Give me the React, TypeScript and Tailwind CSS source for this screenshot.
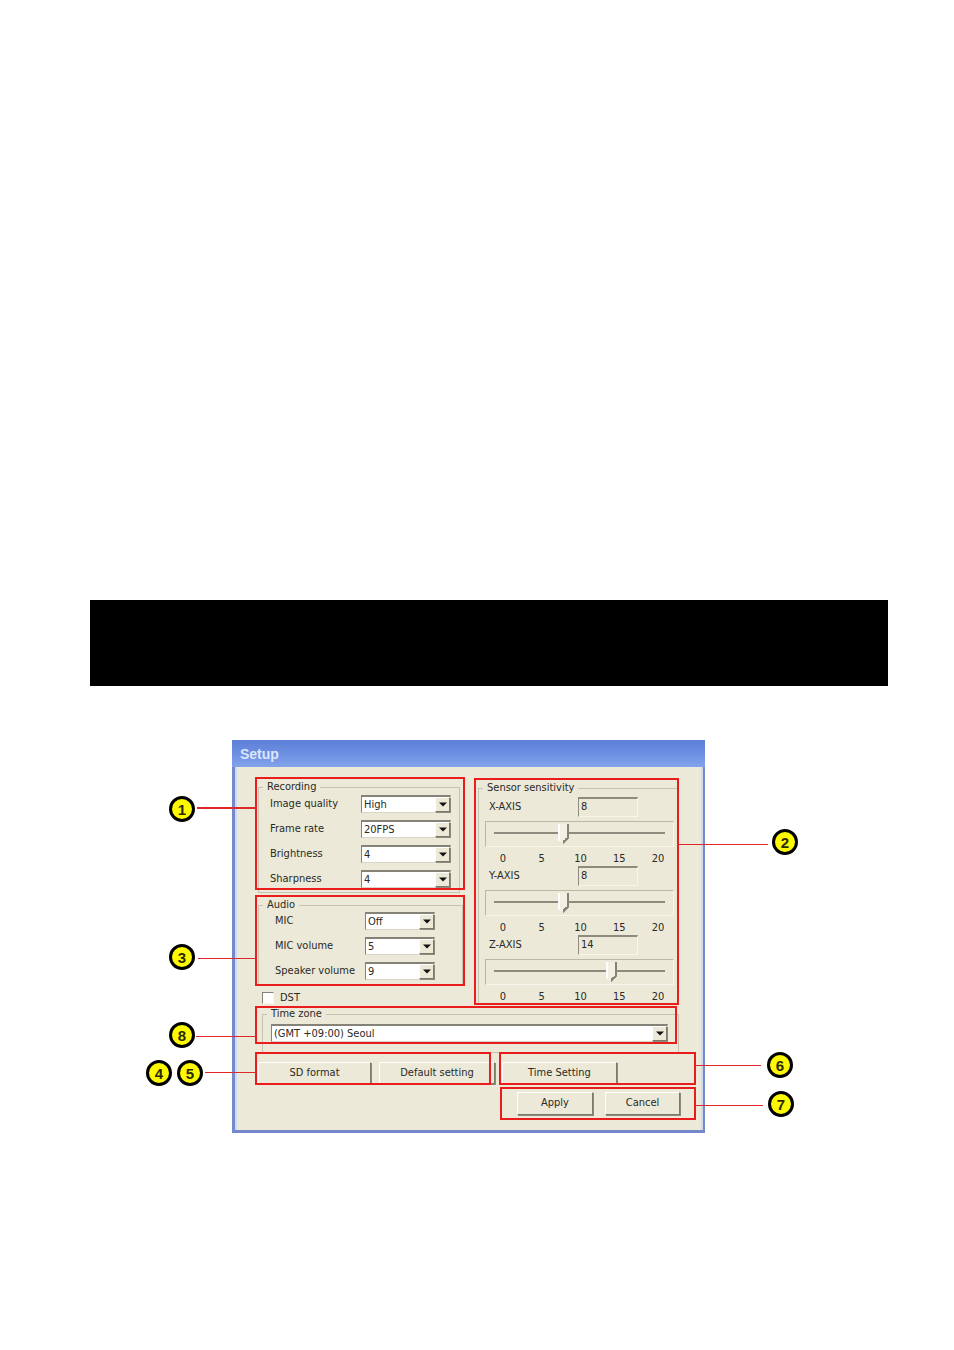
import React from "react";
import type { ReactNode } from "react";

const bevel =
  "border border-t-white border-l-white border-r-[#7d7a6c] border-b-[#7d7a6c] bg-[#ece9d8] shadow-[1px_1px_0_#8d8a7c]";

function Badge({ n, className }: { n: number; className: string }) {
  return (
    <span
      className={`absolute flex size-[26px] items-center justify-center rounded-full border-3 border-black bg-[#fdf900] text-[15px] leading-none font-bold text-[#2b2a05] ${className}`}
    >
      {n}
    </span>
  );
}

function Callout({ box, line, children }: { box: string; line: string; children: ReactNode }) {
  return (
    <div className={`pointer-events-none absolute z-10 border-2 border-[#ea1c1c] font-["Liberation_Sans",Arial,sans-serif] ${box}`}>
      <span className={`absolute bg-[#e0282c] ${line}`} />
      {children}
    </div>
  );
}

function Group({ title, className, children }: { title: ReactNode; className: string; children: ReactNode }) {
  return (
    <fieldset className={`min-w-0 border border-[#c6c3b3] ${className}`}>
      <legend className="ml-1 px-1 leading-[14px]">{title}</legend>
      {children}
    </fieldset>
  );
}

function Select({ id, options, value, className }: { id: string; options: string[]; value: string; className: string }) {
  return (
    <div className={`relative h-[18px] border border-t-2 border-[#d8d5c6] border-t-[#858278] border-l-[#858278] bg-white ${className}`}>
      <select id={id} defaultValue={value} className="block h-full w-full appearance-none bg-transparent pl-0.5 leading-[15px] outline-none">
        {options.map((o) => (
          <option key={o}>{o}</option>
        ))}
      </select>
      <span className={`pointer-events-none absolute top-0 right-0 flex h-[15px] w-[15px] items-center justify-center ${bevel}`}>
        <svg width="8" height="5" viewBox="0 0 8 5" aria-hidden="true">
          <path d="M0 0.5H8L4 4.5Z" fill="#111" />
        </svg>
      </span>
    </div>
  );
}

function Field({ id, label, options, value, width }: { id: string; label: string; options: string[]; value: string; width: string }) {
  return (
    <div className="flex items-center justify-between">
      <label htmlFor={id}>{label}</label>
      <Select id={id} options={options} value={value} className={width} />
    </div>
  );
}

const levels = ["0", "1", "2", "3", "4", "5", "6", "7", "8", "9", "10"];

function Axis({ name, value }: { name: string; value: number }) {
  const id = name.toLowerCase();
  return (
    <div>
      <div className="flex h-5 items-center pr-9 pl-1">
        <label htmlFor={id} className="flex-1 leading-[14px]">
          {name}
        </label>
        <input
          id={id}
          readOnly
          value={value}
          className="h-5 w-[60px] border border-t-2 border-[#f8f6ec] border-t-[#8d8a7e] border-l-[#8d8a7e] bg-[#ece9d8] px-0.5 pb-0.5 outline-none"
        />
      </div>
      <div className="mt-1 h-[26px] border border-[#f8f6ec] border-t-[#bab7a9] border-l-[#bab7a9] px-2">
        <input
          type="range"
          aria-label={`${name} level`}
          min={0}
          max={20}
          defaultValue={value}
          className="block h-6 w-full appearance-none bg-transparent bg-[linear-gradient(#8d8a7e,#8d8a7e)] bg-[length:100%_2px] bg-[position:0_10px] bg-no-repeat outline-none [&::-webkit-slider-thumb]:h-5 [&::-webkit-slider-thumb]:w-[11px] [&::-webkit-slider-thumb]:appearance-none [&::-webkit-slider-thumb]:bg-[linear-gradient(to_bottom_right,transparent_25%,#858276_25%),linear-gradient(to_right,#fff_2px,#f2f0e4_2px,#f2f0e4_9px,#858276_9px)] [&::-webkit-slider-thumb]:bg-[length:6px_6px,100%_100%] [&::-webkit-slider-thumb]:bg-[position:100%_100%,0_0] [&::-webkit-slider-thumb]:bg-no-repeat [&::-webkit-slider-thumb]:[clip-path:polygon(0_0,100%_0,100%_70%,50%_100%,0_80%)]"
        />
      </div>
      <div className="flex h-[19px] items-center justify-between pt-1 pr-1.5 pl-2">
        {[0, 5, 10, 15, 20].map((t) => (
          <span key={t} className="w-5 text-center leading-[14px]">
            {t}
          </span>
        ))}
      </div>
    </div>
  );
}

function PushButton({ className, children }: { className: string; children: ReactNode }) {
  return (
    <button type="button" className={`${bevel} ${className}`}>
      {children}
    </button>
  );
}

export default function App() {
  return (
    <main className="min-h-screen bg-white pt-[600px] pr-[66px] pb-[216px] pl-[90px]">
      <div className="h-[86px] bg-black" />
      <section className='mt-[54px] mr-[183px] ml-[142px] border-3 border-t-0 border-r-2 border-[#7489cb] bg-[#ece9d8] font-["DejaVu_Sans_Condensed","DejaVu_Sans",sans-serif] text-[11px] text-[#2a2a26]'>
        <h1 className='-mr-0.5 -ml-[3px] flex h-[27px] items-center bg-linear-to-b from-[#5d80d8] via-[#6d8fe1] to-[#82a3eb] pt-0.5 pl-2 font-["Liberation_Sans",Arial,sans-serif] text-[14px] font-bold text-[#dbe5fd]'>
          Setup
        </h1>
        <form className="border-x-2 border-[#cfd9f4] pt-[13px] pr-[22px] pb-[15px] pl-[21px]" onSubmit={(e) => e.preventDefault()}>
          <div className="grid grid-cols-[205px_minmax(0,1fr)] gap-x-[15px]">
            <div>
              <div className="relative">
                <Group title="Recording" className="mr-[3px] pb-1">
                  <div className="flex flex-col gap-[7px] pt-px pr-2 pl-[11px]">
                    <Field id="quality" label="Image quality" options={["Low", "Medium", "High"]} value="High" width="w-[90px]" />
                    <Field id="rate" label="Frame rate" options={["10FPS", "20FPS", "30FPS"]} value="20FPS" width="w-[90px]" />
                    <Field id="brightness" label="Brightness" options={levels} value="4" width="w-[90px]" />
                    <Field id="sharpness" label="Sharpness" options={levels} value="4" width="w-[90px]" />
                  </div>
                </Group>
                <Callout box="-top-[3px] bottom-[3px] -left-[3px] -right-0.5" line="top-[28px] right-full h-0.5 w-[60px]">
                  <Badge n={1} className="top-[17px] -left-[88px]" />
                </Callout>
              </div>
              <div className="relative mt-[5px]">
                <Group title="Audio" className="pb-1">
                  <div className="flex flex-col gap-[7px] pr-[27px] pl-4">
                    <Field id="mic" label="MIC" options={["On", "Off"]} value="Off" width="w-[70px]" />
                    <Field id="mic-volume" label="MIC volume" options={levels} value="5" width="w-[70px]" />
                    <Field id="speaker-volume" label="Speaker volume" options={levels} value="9" width="w-[70px]" />
                  </div>
                </Group>
                <Callout box="-top-[3px] -bottom-px -left-[3px] -right-0.5" line="top-[61px] right-full h-px w-[59px]">
                  <Badge n={3} className="top-[47px] -left-[88px]" />
                </Callout>
              </div>
              <label className="mt-1.5 flex h-[14px] items-center gap-1.5 pl-1">
                <input
                  type="checkbox"
                  className="size-3 appearance-none border border-[#f8f6ec] border-t-[#858278] border-l-[#858278] bg-white checked:bg-[#555]"
                />
                DST
              </label>
            </div>
            <div className="relative mt-px">
              <Group title="Sensor sensitivity" className="pb-0">
                <div className="pt-0.5 pr-1 pl-1.5">
                  <Axis name="X-AXIS" value={8} />
                  <Axis name="Y-AXIS" value={8} />
                  <Axis name="Z-AXIS" value={14} />
                </div>
              </Group>
              <Callout box="-top-[3px] bottom-0 -left-1 right-0" line="top-[64px] left-full h-px w-[91px]">
                <Badge n={2} className="top-[49px] -right-[121px]" />
              </Callout>
            </div>
          </div>
          <div className="relative mt-0.5">
            <Group title={<label htmlFor="zone">Time zone</label>} className="ml-1 pb-2.5">
              <div className="pt-[3px] pr-2.5 pl-2">
                <Select id="zone" options={["(GMT +09:00) Seoul"]} value="(GMT +09:00) Seoul" className="w-full" />
              </div>
            </Group>
            <Callout box="-top-px bottom-[9px] -left-[3px] right-0.5" line="top-[28px] right-full h-px w-[61px]">
              <Badge n={8} className="top-[14px] -left-[88px]" />
            </Callout>
          </div>
          <div className="-mr-[17px] mt-[9px] flex gap-[7px]">
            <div className="relative flex gap-2">
              <PushButton className="h-[22px] w-[113px]">SD format</PushButton>
              <PushButton className="h-[22px] w-[116px]">Default setting</PushButton>
              <Callout box="-top-[10px] -bottom-px -left-[3px] right-1" line="top-[18px] right-full h-px w-[52px]">
                <Badge n={4} className="top-[6px] -left-[111px]" />
                <Badge n={5} className="top-[6px] -left-[80px]" />
              </Callout>
            </div>
            <div className="relative flex-1">
              <PushButton className="h-[22px] w-[115px]">Time Setting</PushButton>
              <Callout box="-top-[10px] -bottom-px -left-[3px] right-0" line="top-[11px] left-full h-px w-[67px]">
                <Badge n={6} className="-top-0.5 -right-[99px]" />
              </Callout>
            </div>
          </div>
          <div className="-mr-[17px] mt-2 flex justify-end">
            <div className="relative flex gap-3 pr-4 pl-[17px]">
              <PushButton className="h-[23px] w-[76px]">Apply</PushButton>
              <PushButton className="h-[23px] w-[75px]">Cancel</PushButton>
              <Callout box="-top-[5px] -bottom-[5px] left-0 right-0" line="top-[16px] left-full h-px w-[69px]">
                <Badge n={7} className="top-[2px] -right-[100px]" />
              </Callout>
            </div>
          </div>
        </form>
      </section>
    </main>
  );
}
